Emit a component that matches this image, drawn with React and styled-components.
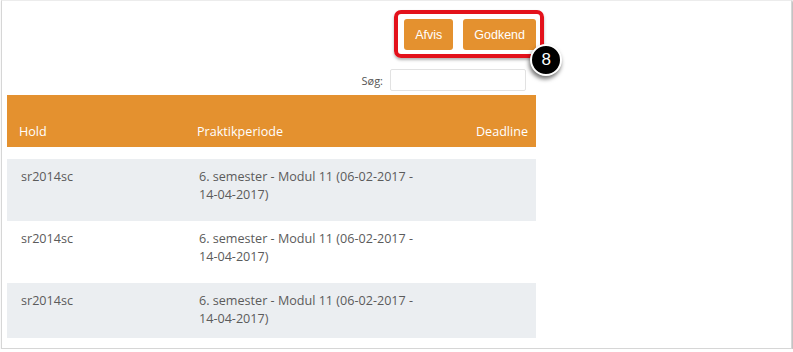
import React from "react";
import styled, { createGlobalStyle } from "styled-components";

const Global = createGlobalStyle`
  html, body { margin: 0; padding: 0; background: #ffffff; }
  body { font-family: "Open Sans", "Liberation Sans", sans-serif; }
`;

const Frame = styled.div`
  position: relative;
  box-sizing: border-box;
  margin-left: 1px;
  width: 791px;
  height: 349px;
  border: 1px solid #d6d6d6;
  border-top-color: #ececec;
  box-shadow: 1px 1px 2px rgba(0, 0, 0, 0.35);
  background: #fff;
  overflow: hidden;
`;

const Content = styled.div`
  width: 529px;
  margin-left: 5px;
  padding-top: 18px;
  display: flex;
  flex-direction: column;
`;

const Toolbar = styled.div`
  display: flex;
  justify-content: flex-end;
`;

const ButtonGroup = styled.div`
  position: relative;
  display: flex;
  gap: 10px;
`;

const ActionButton = styled.button`
  height: 31px;
  padding: 0 ${(p) => p.$pad}px;
  border: none;
  border-radius: 3px;
  background: #e4912f;
  color: #fff;
  font-family: "Liberation Sans", Arial, sans-serif;
  font-size: 12.5px;
  cursor: pointer;
`;

const Highlight = styled.div`
  position: absolute;
  left: -10px;
  top: -9px;
  width: 150px;
  height: 48px;
  box-sizing: border-box;
  border: 4px solid #e3111b;
  border-radius: 7px;
  box-shadow: 0 2px 3px rgba(0, 0, 0, 0.3);
  pointer-events: none;
`;

const Badge = styled.div`
  position: absolute;
  left: 126px;
  top: 25px;
  width: 32px;
  height: 32px;
  box-sizing: border-box;
  border-radius: 50%;
  border: 2px solid #fff;
  background: #000;
  color: #fff;
  font-family: "Liberation Sans", Arial, sans-serif;
  font-size: 17px;
  display: flex;
  align-items: center;
  justify-content: center;
  box-shadow: -1px 3px 4px rgba(0, 0, 0, 0.55);
`;

const SearchRow = styled.div`
  margin-top: 19px;
  display: flex;
  justify-content: flex-end;
  align-items: center;
  gap: 7px;
  padding-right: 10px;
`;

const SearchLabel = styled.label`
  font-size: 11px;
  color: #555;
`;

const SearchInput = styled.input`
  box-sizing: border-box;
  width: 136px;
  height: 22px;
  border: 1px solid #e2e2e2;
  border-radius: 2px;
  outline: none;
`;

const Table = styled.table`
  margin-top: 4px;
  width: 529px;
  border-collapse: collapse;
  table-layout: fixed;
  font-size: 12.6px;
`;

const HeadCell = styled.th`
  height: 52px;
  box-sizing: border-box;
  padding: 0 ${(p) => (p.$right ? 8 : 12)}px 7px ${(p) => (p.$right ? 0 : 12)}px;
  background: #e4912f;
  color: #fff;
  font-weight: 400;
  text-align: ${(p) => (p.$right ? "right" : "left")};
  vertical-align: bottom;
`;

const Spacer = styled.tr`
  height: 12px;
`;

const Row = styled.tr`
  background: ${(p) => (p.$alt ? "#ebeef1" : "#ffffff")};
`;

const Cell = styled.td`
  padding: 9px 12px ${(p) => (p.$last ? 10 : 17)}px 14px;
  color: #5b5b5b;
  line-height: 18px;
  vertical-align: top;
`;

const rows = [
  { hold: "sr2014sc", periode: "6. semester - Modul 11 (06-02-2017 - 14-04-2017)" },
  { hold: "sr2014sc", periode: "6. semester - Modul 11 (06-02-2017 - 14-04-2017)" },
  { hold: "sr2014sc", periode: "6. semester - Modul 11 (06-02-2017 - 14-04-2017)" },
];

export default function App() {
  return (
    <>
      <Global />
      <Frame>
        <Content>
          <Toolbar>
            <ButtonGroup>
              <ActionButton $pad={11}>Afvis</ActionButton>
              <ActionButton $pad={11}>Godkend</ActionButton>
              <Highlight />
              <Badge>8</Badge>
            </ButtonGroup>
          </Toolbar>
          <SearchRow>
            <SearchLabel>Søg:</SearchLabel>
            <SearchInput type="text" />
          </SearchRow>
          <Table>
            <colgroup>
              <col style={{ width: "178px" }} />
              <col style={{ width: "250px" }} />
              <col />
            </colgroup>
            <thead>
              <tr>
                <HeadCell>Hold</HeadCell>
                <HeadCell>Praktikperiode</HeadCell>
                <HeadCell $right>Deadline</HeadCell>
              </tr>
            </thead>
            <tbody>
              <Spacer />
              {rows.map((r, i) => (
                <Row key={i} $alt={i % 2 === 0}>
                  <Cell $last={i === rows.length - 1}>{r.hold}</Cell>
                  <Cell $last={i === rows.length - 1}>{r.periode}</Cell>
                  <Cell $last={i === rows.length - 1} />
                </Row>
              ))}
            </tbody>
          </Table>
        </Content>
      </Frame>
    </>
  );
}
